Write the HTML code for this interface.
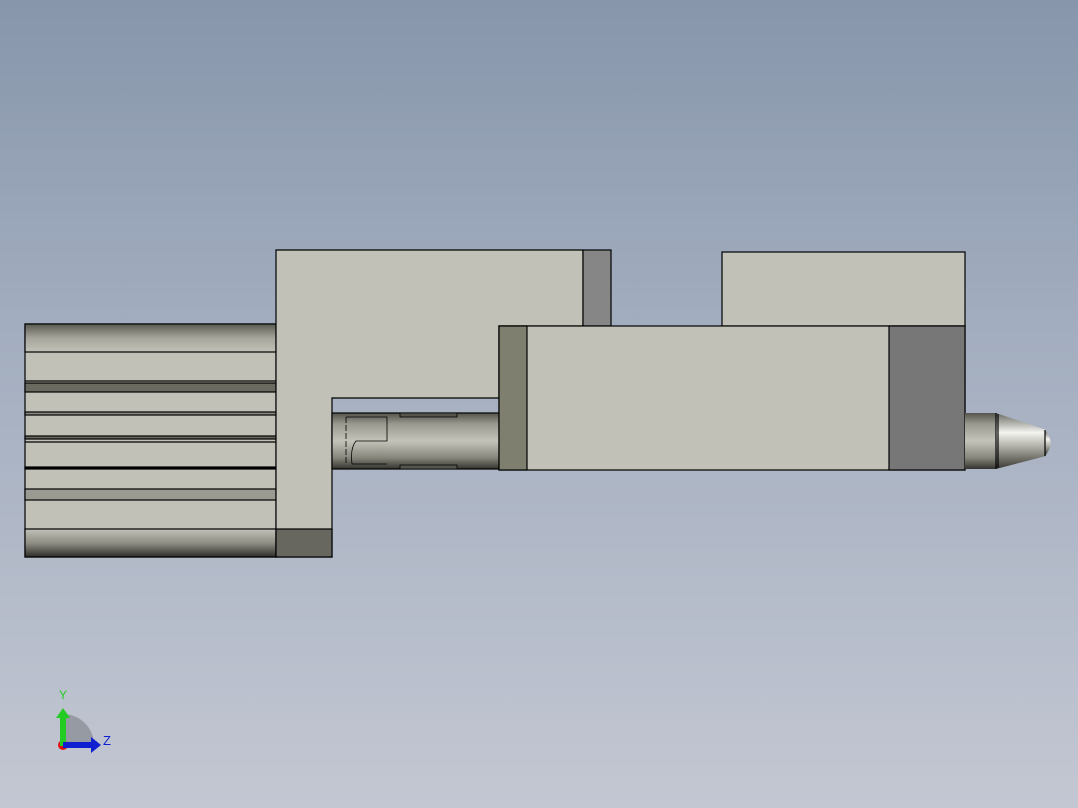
<!DOCTYPE html>
<html><head><meta charset="utf-8"><style>
html,body{margin:0;padding:0;width:1078px;height:808px;overflow:hidden}
body{background:linear-gradient(to bottom,#8796ab 0%,#a2adbf 40%,#c3c7d2 100%)}
svg{position:absolute;left:0;top:0}
</style></head><body>
<svg width="1078" height="808" viewBox="0 0 1078 808" xmlns="http://www.w3.org/2000/svg">
<defs>
<linearGradient id="cylTop" x1="0" y1="0" x2="0" y2="1">
<stop offset="0" stop-color="#5a5a52"/><stop offset="0.5" stop-color="#a5a59c"/><stop offset="1" stop-color="#c1c1b8"/></linearGradient>
<linearGradient id="cylBot" x1="0" y1="0" x2="0" y2="1">
<stop offset="0" stop-color="#c1c1b8"/><stop offset="0.5" stop-color="#8e8e85"/><stop offset="1" stop-color="#2e2e28"/></linearGradient>
<linearGradient id="shaft" x1="0" y1="0" x2="0" y2="1">
<stop offset="0" stop-color="#55554e"/><stop offset="0.2" stop-color="#9a9a90"/><stop offset="0.5" stop-color="#c4c4ba"/><stop offset="0.8" stop-color="#85857c"/><stop offset="1" stop-color="#34342e"/></linearGradient>
<linearGradient id="cone" x1="0" y1="0" x2="0" y2="1">
<stop offset="0" stop-color="#6a6a64"/><stop offset="0.35" stop-color="#f4f4f0"/><stop offset="0.6" stop-color="#b0b0a8"/><stop offset="1" stop-color="#3a3a34"/></linearGradient>
</defs>
<g stroke="#000" stroke-width="1.2">
<!-- left cylinder -->
<rect x="25" y="324" width="251" height="233" fill="#c1c1b8"/>
<rect x="25" y="324" width="251" height="28" fill="url(#cylTop)"/>
<rect x="25" y="529" width="251" height="28" fill="url(#cylBot)"/>
<rect x="25" y="383" width="251" height="9" fill="#6a6a60"/>
<line x1="25" y1="381" x2="276" y2="381"/>
<rect x="25" y="412" width="251" height="3" fill="#8a8a82"/>
<rect x="25" y="436" width="251" height="3" fill="#6a6a60"/>
<line x1="25" y1="442" x2="276" y2="442"/>
<rect x="25" y="467" width="251" height="2" fill="#000"/>
<rect x="25" y="489" width="251" height="11" fill="#9a9a92"/>
<!-- bracket -->
<polygon points="276,250 583,250 583,326 499,326 499,398 332,398 332,557 276,557" fill="#c1c1b8"/>
<rect x="583" y="250" width="28" height="76" fill="#868686"/>
<rect x="276" y="529" width="56" height="28" fill="#67675f"/>
<!-- shaft -->
<rect x="332" y="413" width="168" height="56" fill="url(#shaft)"/>
<path d="M346 417 H387 V441 H356 Q350 448 352 464 H387" fill="none" stroke-width="0.8"/>
<path d="M346 417 V464" fill="none" stroke-width="0.8" stroke-dasharray="6 2"/>
<path d="M400 413 H457 V417 H400 Z M400 465 H457 V469 H400 Z" fill="#55554e" stroke-width="0.8"/>
<!-- top right block -->
<rect x="722" y="252" width="243" height="74" fill="#c1c1b8"/>
<!-- main block -->
<rect x="499" y="326" width="466" height="144" fill="#c1c1b8"/>
<rect x="499" y="326" width="28" height="144" fill="#7f7f6f"/>
<rect x="889" y="326" width="76" height="144" fill="#777777"/>
<!-- nose -->
<rect x="965" y="413" width="31" height="56" fill="url(#shaft)" stroke="none"/>
<path d="M996 413 L1046 430 L1046 456 L996 469 Z" fill="url(#cone)" stroke="none"/>
<path d="M1045 430 Q1056 443 1045 456 Z" fill="url(#cone)" stroke="none"/>
<line x1="996" y1="413" x2="996" y2="469"/>
<line x1="998" y1="414" x2="998" y2="468"/>
<line x1="1045" y1="430" x2="1045" y2="456"/>
</g>
<!-- axis triad -->
<path d="M63 745 V714 A31 31 0 0 1 94 745 Z" fill="#8c9096" opacity="0.8"/>
<circle cx="63" cy="745" r="5" fill="#e01010"/>
<rect x="60" y="716" width="6" height="30" fill="#22cc22"/>
<path d="M56 718 L63 708 L70 718 Z" fill="#22cc22"/>
<rect x="63" y="742" width="30" height="6" fill="#1020d0"/>
<path d="M91 737 L101 745 L91 753 Z" fill="#1020d0"/>
<text x="59" y="699" font-family="Liberation Sans, sans-serif" font-size="12" fill="#22cc22">Y</text>
<text x="103" y="745" font-family="Liberation Sans, sans-serif" font-size="13" fill="#1020d0">Z</text>
</svg>
</body></html>
